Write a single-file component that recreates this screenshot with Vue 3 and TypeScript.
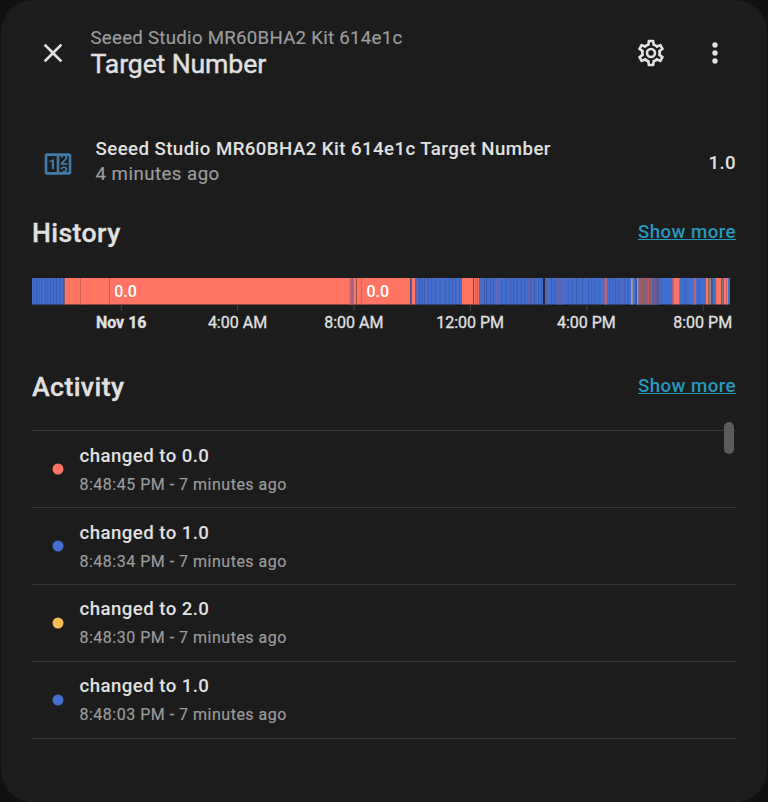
<script setup lang="ts">
interface Band { from: number; to: number; color: string }
interface Entry { value: string; time: string; color: string }

const RED = '#ff7463'
const BLUE = '#446fd0'
const MAUVE = '#7d609b'
const BROWN = '#9b5e67'

const bands: Band[] = [
  { from: 32, to: 64.6, color: BLUE },
  { from: 64.6, to: 415.5, color: RED },
  { from: 80, to: 80.8, color: '#c95f57' },
  { from: 109.2, to: 110, color: '#b5564f' },
  { from: 349.5, to: 350.5, color: '#d86b68' },
  { from: 350.5, to: 353.7, color: '#9b6585' },
  { from: 356, to: 357, color: '#a15350' },
  { from: 361.2, to: 362.2, color: '#d0645a' },
  { from: 410, to: 411.8, color: '#544c83' },
  { from: 415.5, to: 461.6, color: BLUE },
  { from: 415.5, to: 416.6, color: MAUVE },
  { from: 461.6, to: 479.5, color: RED },
  { from: 473, to: 474, color: '#83484e' },
  { from: 475.3, to: 476.2, color: '#bb5b58' },
  { from: 477.3, to: 478.2, color: '#b05a5b' },
  { from: 479.5, to: 673.3, color: BLUE },
  { from: 479.5, to: 480.3, color: MAUVE },
  { from: 496.5, to: 498.3, color: MAUVE },
  { from: 527, to: 528.5, color: '#6e5d9d' },
  { from: 530.3, to: 531.7, color: '#6c568d' },
  { from: 543, to: 545, color: '#1d2647' },
  { from: 545.4, to: 547.4, color: '#65619f' },
  { from: 557.3, to: 559.5, color: '#6465a9' },
  { from: 560.5, to: 562.8, color: '#6465a9' },
  { from: 603.8, to: 604.7, color: MAUVE },
  { from: 604.7, to: 606.8, color: '#ce635f' },
  { from: 620.6, to: 621.5, color: '#70629c' },
  { from: 631, to: 632.8, color: '#a69ba0' },
  { from: 635.5, to: 637, color: '#38539c' },
  { from: 637, to: 638.6, color: '#a290c9' },
  { from: 638.6, to: 643.7, color: BROWN },
  { from: 643.7, to: 647.7, color: '#8a6079' },
  { from: 647.7, to: 649.3, color: '#c95f5a' },
  { from: 649.3, to: 650.5, color: '#80546e' },
  { from: 650.5, to: 652.1, color: '#ab5c63' },
  { from: 652.1, to: 659.6, color: '#5f5e9a' },
  { from: 654.2, to: 655, color: '#7d5d83' },
  { from: 657.3, to: 658.1, color: '#425691' },
  { from: 672, to: 673.3, color: '#a2658d' },
  { from: 673.3, to: 679.8, color: RED },
  { from: 679.8, to: 706, color: BLUE },
  { from: 693.3, to: 694.2, color: MAUVE },
  { from: 694.2, to: 695.8, color: '#c8656a' },
  { from: 706, to: 708.5, color: RED },
  { from: 708.5, to: 711.2, color: '#8d806f' },
  { from: 711.2, to: 712.3, color: '#635a91' },
  { from: 712.3, to: 716, color: BLUE },
  { from: 716, to: 721.4, color: RED },
  { from: 721.4, to: 723.6, color: '#82717c' },
  { from: 723.6, to: 728, color: RED },
  { from: 726, to: 726.8, color: '#c15d58' },
  { from: 728, to: 730, color: BLUE },
]

const thinMarks = [
  33.5, 36.2, 38.5, 41.4, 45.3, 47.4, 50.3, 53.2, 56.1, 59.6, 63,
  419.2, 421.6, 424, 428.2, 431.3, 435.4, 439.6, 444.5, 448.8, 452, 455.3, 459.4,
  484, 486.2, 490.1, 493, 501, 505.7, 510.1, 513.3, 516.8, 520.7, 524.4, 534, 538.2, 541,
  551, 554.5, 567.8, 571.8, 576.2, 582, 588, 591.3, 594.5, 599.5,
  609.4, 612.3, 615.2, 618.5, 624, 627.5, 660.7, 684.8, 698.8,
]

const ticks = ['Nov 16', '4:00 AM', '8:00 AM', '12:00 PM', '4:00 PM', '8:00 PM']

const entries: Entry[] = [
  { value: '0.0', time: '8:48:45 PM', color: RED },
  { value: '1.0', time: '8:48:34 PM', color: BLUE },
  { value: '2.0', time: '8:48:30 PM', color: '#f6bd54' },
  { value: '1.0', time: '8:48:03 PM', color: BLUE },
]
</script>

<template>
  <main class="dialog">
    <header class="header">
      <svg class="icon" viewBox="0 0 24 24"><path d="M19,6.41L17.59,5L12,10.59L6.41,5L5,6.41L10.59,12L5,17.59L6.41,19L12,13.41L17.59,19L19,17.59L13.41,12L19,6.41Z" /></svg>
      <div class="heading">
        <div class="crumb">Seeed Studio MR60BHA2 Kit 614e1c</div>
        <h1 class="title">Target Number</h1>
      </div>
      <svg class="icon" viewBox="0 0 24 24"><path d="M12,8A4,4 0 0,1 16,12A4,4 0 0,1 12,16A4,4 0 0,1 8,12A4,4 0 0,1 12,8M12,10A2,2 0 0,0 10,12A2,2 0 0,0 12,14A2,2 0 0,0 14,12A2,2 0 0,0 12,10M10,22C9.75,22 9.54,21.82 9.5,21.58L9.13,18.93C8.5,18.68 7.96,18.34 7.44,17.94L4.95,18.95C4.73,19.03 4.46,18.95 4.34,18.73L2.34,15.27C2.21,15.05 2.27,14.78 2.46,14.63L4.57,12.97L4.5,12L4.57,11L2.46,9.37C2.27,9.22 2.21,8.95 2.34,8.73L4.34,5.27C4.46,5.05 4.73,4.96 4.95,5.05L7.44,6.05C7.96,5.66 8.5,5.32 9.13,5.07L9.5,2.42C9.54,2.18 9.75,2 10,2H14C14.25,2 14.46,2.18 14.5,2.42L14.87,5.07C15.5,5.32 16.04,5.66 16.56,6.05L19.05,5.05C19.27,4.96 19.54,5.05 19.66,5.27L21.66,8.73C21.79,8.95 21.73,9.22 21.54,9.37L19.43,11L19.5,12L19.43,13L21.54,14.63C21.73,14.78 21.79,15.05 21.66,15.27L19.66,18.73C19.54,18.95 19.27,19.04 19.05,18.95L16.56,17.95C16.04,18.34 15.5,18.68 14.87,18.93L14.5,21.58C14.46,21.82 14.25,22 14,22H10M11.25,4L10.88,6.61C9.68,6.86 8.62,7.5 7.85,8.39L5.44,7.35L4.69,8.65L6.8,10.2C6.4,11.37 6.4,12.64 6.8,13.8L4.68,15.36L5.43,16.66L7.86,15.62C8.63,16.5 9.68,17.14 10.87,17.38L11.24,20H12.76L13.13,17.39C14.32,17.14 15.37,16.5 16.14,15.62L18.57,16.66L19.32,15.36L17.2,13.81C17.6,12.64 17.6,11.37 17.2,10.2L19.31,8.65L18.56,7.35L16.15,8.39C15.38,7.5 14.32,6.86 13.12,6.62L12.75,4H11.25Z" /></svg>
      <svg class="icon menu" viewBox="0 0 24 24"><path d="M12,16A2,2 0 0,1 14,18A2,2 0 0,1 12,20A2,2 0 0,1 10,18A2,2 0 0,1 12,16M12,10A2,2 0 0,1 14,12A2,2 0 0,1 12,14A2,2 0 0,1 10,12A2,2 0 0,1 12,10M12,4A2,2 0 0,1 14,6A2,2 0 0,1 12,8A2,2 0 0,1 10,6A2,2 0 0,1 12,4Z" /></svg>
    </header>

    <section class="state">
      <svg class="icon counter" viewBox="0 0 24 24"><path d="M4,4H20A2,2 0 0,1 22,6V18A2,2 0 0,1 20,20H4A2,2 0 0,1 2,18V6A2,2 0 0,1 4,4M4,6V18H11V6H4M20,18V6H18.76C19,6.54 18.95,7.07 18.95,7.13C18.88,7.8 18.41,8.5 18.24,8.75L15.91,11.3L19.23,11.28L19.24,12.5L14.04,12.47L14,11.47C14,11.47 17.05,8.24 17.2,7.95C17.34,7.67 17.91,6 16.5,6C15.27,6.05 15.41,7.3 15.41,7.3L13.87,7.31C13.87,7.31 13.88,6.65 14.25,6H13V18H15.58L15.57,17.14L16.54,17.13C16.54,17.13 17.45,16.97 17.46,16.08C17.5,15.08 16.65,15.08 16.5,15.08C16.37,15.08 15.43,15.13 15.43,15.95H13.91C13.91,15.95 13.95,13.89 16.5,13.89C19.1,13.89 18.96,15.91 18.96,15.91C18.96,15.91 19,17.16 17.85,17.63L18.37,18H20M8.92,16H7.42V10.2L5.62,10.76V9.53L8.76,8.41H8.92V16Z" /></svg>
      <div class="info">
        <div class="name">Seeed Studio MR60BHA2 Kit 614e1c Target Number</div>
        <div class="ago">4 minutes ago</div>
      </div>
      <div class="value">1.0</div>
    </section>

    <section class="history">
      <div class="section-head">
        <h2>History</h2>
        <a class="more">Show more</a>
      </div>
      <svg class="timeline" viewBox="32 278 704 56">
        <rect v-for="(b, i) in bands" :key="i" :x="b.from" y="278" :width="b.to - b.from" height="26.5" :fill="b.color" />
        <rect v-for="x in thinMarks" :key="x" :x="x" y="278" width="0.9" height="26.5" fill="#39529a" opacity="0.65" />
        <text class="bar-label" x="125.5" y="296.8">0.0</text>
        <text class="bar-label" x="377.8" y="296.8">0.0</text>
        <g v-for="(t, i) in ticks" :key="t">
          <rect :x="120.7 + i * 116.4" y="305" width="1" height="6" fill="#444444" />
          <text class="tick" :class="{ strong: i === 0 }" :x="121.2 + i * 116.3" y="328.2">{{ t }}</text>
        </g>
      </svg>
    </section>

    <section class="activity">
      <div class="section-head">
        <h2>Activity</h2>
        <a class="more">Show more</a>
      </div>
      <div class="log">
        <article v-for="e in entries" :key="e.time" class="entry">
          <svg class="dot" viewBox="0 0 12 12"><circle cx="6" cy="6" r="5.5" :fill="e.color" /></svg>
          <div class="entry-text">
            <div class="message">changed to {{ e.value }}</div>
            <div class="when">{{ e.time }} - 7 minutes ago</div>
          </div>
        </article>
        <div class="scrollbar"></div>
      </div>
    </section>
  </main>
</template>

<style>
body {
  background: #111111;
}
</style>

<style scoped>
.dialog {
  box-sizing: border-box;
  height: 802px;
  margin: 0 1px;
  padding: 0 31px;
  border-radius: 32px;
  background: #1c1c1c;
  color: #e1e1e1;
  font-family: Roboto, "Liberation Sans", sans-serif;
  overflow: hidden;
}
.header {
  display: flex;
  align-items: center;
  height: 105px;
  padding: 0 5px;
}
.icon {
  flex: none;
  width: 32px;
  height: 32px;
  fill: #e1e1e1;
}
.menu {
  margin-left: 32px;
}
.heading {
  flex: 1;
  padding-left: 21.5px;
}
.crumb {
  color: #9b9b9b;
  font-size: 18.67px;
  line-height: 22px;
  letter-spacing: 0.27px;
  -webkit-text-stroke: 0.2px #9b9b9b;
}
.title {
  margin: 0;
  font-size: 26.67px;
  line-height: 30px;
  font-weight: 400;
  letter-spacing: -0.14px;
  -webkit-text-stroke: 0.4px #e1e1e1;
}
.state {
  display: flex;
  align-items: center;
  height: 117px;
  padding-left: 10px;
}
.counter {
  fill: #4379a6;
}
.info {
  flex: 1;
  padding: 0 0 3px 21.5px;
  font-size: 18.67px;
  line-height: 25px;
  letter-spacing: 0.4px;
}
.name {
  font-weight: 500;
  letter-spacing: 0.43px;
}
.ago {
  color: #9b9b9b;
  letter-spacing: 0.47px;
  -webkit-text-stroke: 0.2px #9b9b9b;
}
.value {
  padding-bottom: 1px;
  font-size: 18.67px;
  font-weight: 500;
  letter-spacing: 0.4px;
}
.history {
  height: 154px;
}
.section-head {
  display: flex;
  justify-content: space-between;
  height: 56px;
}
h2 {
  margin: 0;
  font-size: 26.67px;
  line-height: 22px;
  font-weight: 500;
  letter-spacing: 0.4px;
  -webkit-text-stroke: 0.3px #e1e1e1;
}
.more {
  color: #2698bd;
  font-size: 18.67px;
  line-height: 20px;
  font-weight: 500;
  letter-spacing: 0.45px;
  text-decoration: underline;
  text-decoration-thickness: 1.33px;
}
.timeline {
  display: block;
  width: 704px;
  height: 56px;
}
.bar-label {
  fill: #ffffff;
  font-size: 16px;
  font-weight: 500;
  text-anchor: middle;
}
.tick {
  fill: #e1e1e1;
  font-size: 16px;
  stroke: #e1e1e1;
  stroke-width: 0.3px;
  text-anchor: middle;
}
.strong {
  font-weight: 700;
}
.log {
  position: relative;
  margin-top: -2px;
  border-top: 1.33px solid #363636;
}
.entry {
  box-sizing: border-box;
  display: flex;
  align-items: center;
  gap: 15.5px;
  height: 76.9px;
  padding-left: 20px;
  border-bottom: 1.33px solid #363636;
}
.entry-text {
  padding-top: 1.5px;
}
.dot {
  width: 12px;
  height: 12px;
}
.message {
  font-size: 18.67px;
  line-height: 30px;
  font-weight: 500;
  letter-spacing: 0.43px;
}
.when {
  color: #9b9b9b;
  font-size: 16px;
  line-height: 28px;
  letter-spacing: 0.5px;
  -webkit-text-stroke: 0.2px #9b9b9b;
}
.scrollbar {
  position: absolute;
  top: -9px;
  right: 2.5px;
  width: 9.5px;
  height: 32px;
  border-radius: 5px;
  background: #5b5b5b;
}
</style>
